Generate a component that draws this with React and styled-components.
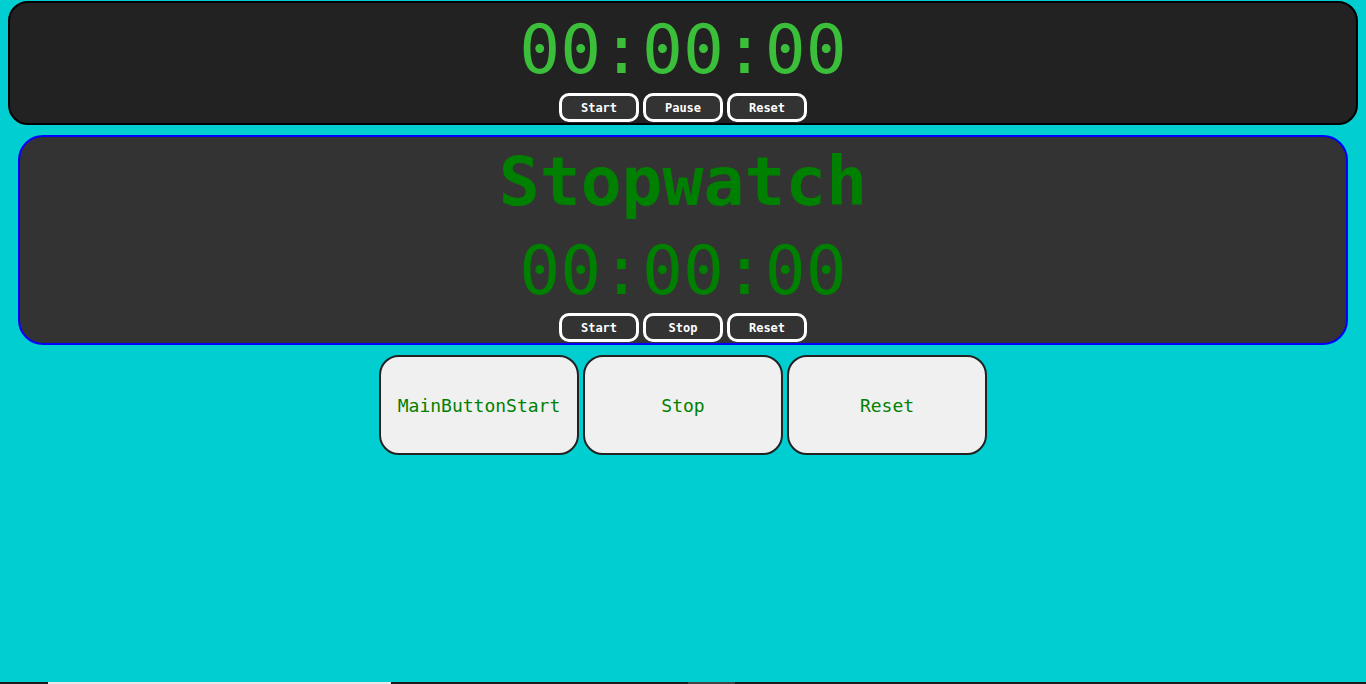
import React from 'react'
import styled, { createGlobalStyle } from 'styled-components'

const GlobalStyle = createGlobalStyle`
  html, body {
    margin: 0;
    padding: 0;
    background: #00ced1;
  }
  #root {
    min-height: 100vh;
    display: flex;
    flex-direction: column;
  }
`

const Page = styled.div`
  flex: 1;
  display: flex;
  flex-direction: column;
  font-family: "DejaVu Sans Mono", "Liberation Mono", monospace;
`

const Panel = styled.div`
  display: flex;
  flex-direction: column;
  align-items: center;
  background: ${props => props.bg};
  border: 2px solid ${props => props.edge};
  border-radius: ${props => props.radius}px;
  margin: ${props => props.margin};
  padding: ${props => props.pad};
`

const Title = styled.h1`
  margin: 0 0 10px;
  font-size: 68px;
  line-height: 79px;
  font-weight: bold;
  color: #008000;
`

const Time = styled.div`
  font-size: 68px;
  line-height: 79px;
  color: ${props => props.color};
  margin-bottom: ${props => props.gap}px;
`

const Controls = styled.div`
  display: flex;
  gap: 4px;
`

const SmallButton = styled.button`
  width: 80px;
  height: 29px;
  box-sizing: border-box;
  background: #333;
  color: #fff;
  border: 3px solid #fff;
  border-radius: 10px;
  font-family: "DejaVu Sans Mono", monospace;
  font-size: 12px;
  font-weight: bold;
  padding: 0;
`

const MainRow = styled.div`
  display: flex;
  justify-content: center;
  gap: 4px;
  margin-top: 10px;
`

const MainButton = styled.button`
  width: 200px;
  height: 100px;
  box-sizing: border-box;
  background: #f0f0f0;
  color: #008000;
  border: 2px solid #222;
  border-radius: 20px;
  font-family: "DejaVu Sans Mono", monospace;
  font-size: 18px;
  padding: 0;
`

const Spacer = styled.div`
  flex: 1;
`

const Taskbar = styled.div`
  height: 2px;
  display: flex;
  background: #1c1c1c;
`

const TaskSegment = styled.div`
  width: ${props => props.w}px;
  margin-left: ${props => props.left}px;
  background: ${props => props.color};
`

const App = () => {
  return (
    <Page>
      <GlobalStyle />
      <Panel bg="#222" edge="#000" radius={20} margin="1px 8px 0" pad="7px 0 1px">
        <Time color="#3bbf3b" gap={4}>00:00:00</Time>
        <Controls>
          <SmallButton>Start</SmallButton>
          <SmallButton>Pause</SmallButton>
          <SmallButton>Reset</SmallButton>
        </Controls>
      </Panel>
      <Panel bg="#333" edge="#0000ff" radius={25} margin="10px 18px 0" pad="5px 0 1px">
        <Title>Stopwatch</Title>
        <Time color="#008000" gap={3}>00:00:00</Time>
        <Controls>
          <SmallButton>Start</SmallButton>
          <SmallButton>Stop</SmallButton>
          <SmallButton>Reset</SmallButton>
        </Controls>
      </Panel>
      <MainRow>
        <MainButton>MainButtonStart</MainButton>
        <MainButton>Stop</MainButton>
        <MainButton>Reset</MainButton>
      </MainRow>
      <Spacer />
      <Taskbar>
        <TaskSegment w={343} left={48} color="#e8e8e8" />
        <TaskSegment w={47} left={297} color="#444" />
      </Taskbar>
    </Page>
  )
}

export default App
